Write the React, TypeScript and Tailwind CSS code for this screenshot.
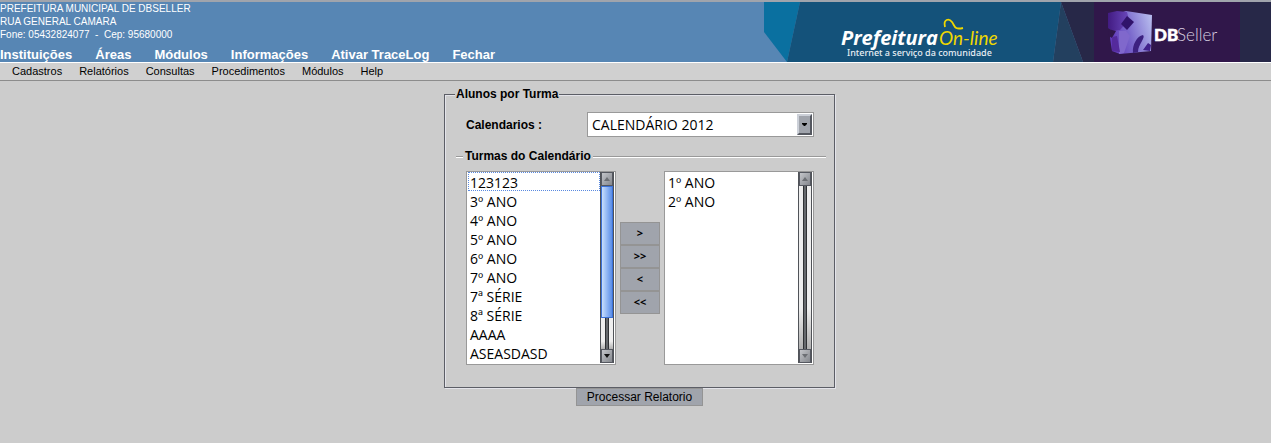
import { useState } from "react";

const areas = ["Instituições", "Áreas", "Módulos", "Informações", "Ativar TraceLog", "Fechar"];
const menus = ["Cadastros", "Relatórios", "Consultas", "Procedimentos", "Módulos", "Help"];
const turmas = ["123123", "3º ANO", "4º ANO", "5º ANO", "6º ANO", "7º ANO", "7ª SÉRIE", "8ª SÉRIE", "AAAA", "ASEASDASD"];

function Banner() {
  return (
    <svg width="507" height="60" viewBox="0 0 507 60" className="shrink-0" role="img" aria-label="Prefeitura On-line, DBSeller">
      <defs>
        <linearGradient id="cube" x1="0" y1="0.6" x2="1" y2="0.3">
          <stop offset="0" stopColor="#6038b8" />
          <stop offset="0.45" stopColor="#7a68cc" />
          <stop offset="1" stopColor="#b4b8ec" />
        </linearGradient>
        <linearGradient id="side" x1="0" y1="0" x2="1" y2="0">
          <stop offset="0" stopColor="#421b82" />
          <stop offset="1" stopColor="#6a48bc" />
        </linearGradient>
      </defs>
      <path d="M0 0H36L23 60L0 30Z" fill="#0a70a0" />
      <path d="M36 0H297L289 60H23Z" fill="#14527a" />
      <path d="M297 0L319 60H289Z" fill="#23405f" />
      <path d="M297 0H507V60H319Z" fill="#272848" />
      <path d="M330 0H476V60H330Z" fill="#30174a" />
      <text x="77" y="43" fontSize="20" fontWeight="700" fontStyle="italic" fill="#fff" fontFamily="'Open Sans',sans-serif">Prefeitura</text>
      <text x="175" y="43" fontSize="19" fontStyle="italic" fill="#f0d800" fontFamily="Lato,sans-serif">On-line</text>
      <text x="83" y="54" fontSize="9" fontWeight="500" fill="#e8eef4" fontFamily="'Noto Sans',sans-serif">Internet a serviço da comunidade</text>
      <path d="M181 25C179 17 185 16 188 20C191 24 190 28 199 26" fill="none" stroke="#f0d800" strokeWidth="1.8" />
      {/* cube: front face, darker left side, then the carved openings */}
      <path d="M347 14L362 9L388 13L387 49L356 52L348 49L346 36Z" fill="url(#cube)" />
      <path d="M344 11L353 9L363 10L365 18L356 28L348 29L344 26Z" fill="url(#side)" />
      <path d="M344 27L352 29L348 36L345 34Z" fill="#30174a" />
      <path d="M357 22L363 14L370 20L363 28Z" fill="#30136b" />
      <path d="M355 29L362 29L366 34L360 51L355 52Z" fill="#8068cc" />
      <path d="M348 35L353 34L356 50L348 49Z" fill="#542a9c" />
      <path d="M369 51C368 43 373 34 379 33C382 36 374 42 374 50Z" fill="#3c2180" />
      <path d="M379 48L384 41L387 43L386 49Z" fill="#40208a" />
      <text x="390" y="39" fontSize="17" fontWeight="900" fill="#fff" stroke="#fff" strokeWidth="0.5" fontFamily="Lato,sans-serif">DB</text>
      <text x="413" y="39" fontSize="17" fontWeight="300" fill="#d8d0e0" fontFamily="Lato,sans-serif">Seller</text>
    </svg>
  );
}

function ScrollBar({ thumb }: { thumb: boolean }) {
  const button = "flex h-3.5 w-full shrink-0 items-center justify-center border border-[#555860] bg-linear-to-br from-[#c4c6ca] to-[#85888e]";
  return (
    <div aria-hidden="true" className="flex w-3.5 shrink-0 flex-col border-x border-[#505358] bg-[#ededed]">
      <div className={button}>
        <svg width="6" height="4" viewBox="0 0 6 4"><path d="M3 0L6 4H0Z" fill="#6c6f74" /></svg>
      </div>
      {thumb && <div className="h-33 shrink-0 border border-[#3c72d8] bg-linear-to-r from-[#c8defc] to-[#5a8de8]" />}
      <div className="flex flex-1 justify-center bg-linear-to-b from-[#eeeeee] from-75% to-[#b0b0b0]">
        <div className="w-1 border-x border-[#2f3134] bg-[#65686c]" />
      </div>
      <div className={button}>
        <svg width="6" height="4" viewBox="0 0 6 4"><path d="M0 0H6L3 4Z" fill={thumb ? "#111" : "#6c6f74"} /></svg>
      </div>
    </div>
  );
}

function ListBox({ label, items, thumb, focused }: { label: string; items: string[]; thumb: boolean; focused: boolean }) {
  return (
    <div className="flex h-[194px] w-[150px] border border-[#999] bg-white px-px pb-px">
      <select
        multiple
        size={10}
        aria-label={label}
        className="min-w-0 flex-1 overflow-y-auto bg-white font-['Comic_Sans_MS','Open_Sans',sans-serif] text-[14px] text-black outline-none [scrollbar-width:none]"
      >
        {items.map((item, i) => (
          <option
            key={item}
            className={
              focused && i === 0
                ? "h-[19px] min-h-0 border border-dotted border-[#5a8ae0] px-px py-0 leading-[17px]"
                : "h-[19px] min-h-0 border border-transparent px-px py-0 leading-[17px]"
            }
          >
            {item}
          </option>
        ))}
      </select>
      <ScrollBar thumb={thumb} />
    </div>
  );
}

export default function App() {
  const [calendar, setCalendar] = useState("CALENDÁRIO 2012");
  return (
    <div className="min-h-screen bg-[#ccc] font-['Liberation_Sans',Arial,sans-serif] text-black">
      <header className="flex justify-between border-t-2 border-[#a0a4ac] bg-[#5786b4] text-white">
        <div className="flex flex-col justify-between">
          <address className="text-[10px] leading-[13px] not-italic">
            PREFEITURA MUNICIPAL DE DBSELLER<br />
            RUA GENERAL CAMARA<br />
            Fone: 05432824077 &nbsp;-&nbsp; Cep: 95680000
          </address>
          <nav aria-label="Principal" className="flex gap-[23px] text-[13px] leading-[15px] font-bold">
            {areas.map((a) => <a key={a} href="#">{a}</a>)}
          </nav>
        </div>
        <Banner />
      </header>
      <nav aria-label="Menu" className="flex h-[19px] gap-[17px] border-t border-b border-t-white border-b-[#8c8c8c] bg-[#d0d0d0] pl-3 text-[11px] leading-[17px]">
        {menus.map((m) => <a key={m} href="#">{m}</a>)}
      </nav>
      <main className="flex flex-col items-center pt-[5px] pl-2 text-[12px]">
        <form className="flex flex-col items-center" onSubmit={(e) => e.preventDefault()}>
          <fieldset className="w-[391px] border border-[#5c5e66] pr-2 pb-[22px] pl-[11px] shadow-[1px_1px_0_#e4e4ea,inset_1px_1px_0_#e4e4ea]">
            <legend className="-ml-px bg-[#ccc] px-px leading-4 font-bold">Alunos por Turma</legend>
            <div className="mt-2.5 flex items-center justify-between pr-3 pl-2.5">
              <label htmlFor="calendar" className="font-bold">Calendarios :</label>
              <div className="flex h-[25px] w-[227px] border border-[#999] bg-white p-px">
                <select
                  id="calendar"
                  value={calendar}
                  onChange={(e) => setCalendar(e.target.value)}
                  className="min-w-0 flex-1 appearance-none bg-white pl-[3px] font-['Comic_Sans_MS','Open_Sans',sans-serif] text-[14px] outline-none"
                >
                  <option>CALENDÁRIO 2012</option>
                </select>
                <span aria-hidden="true" className="flex w-[15px] items-center justify-center border-2 border-t-[#ccd0d8] border-r-[#555860] border-b-[#555860] border-l-[#ccd0d8] bg-[#a0a4ac]">
                  <svg width="5" height="3" viewBox="0 0 5 3"><path d="M0 0H5V1L3 3H2L0 1Z" /></svg>
                </span>
              </div>
            </div>
            <fieldset className="mt-[11px] border-t border-[#999] pr-3 pl-2.5 shadow-[inset_0_1px_0_#fff]">
              <legend className="-ml-[3px] bg-[#ccc] px-0.5 leading-4 font-bold">Turmas do Calendário</legend>
              <div className="mt-[7px] flex items-center justify-between">
                <ListBox label="Turmas do Calendário" items={turmas} thumb focused />
                <div className="flex w-10 flex-col">
                  {[">", ">>", "<", "<<"].map((s) => (
                    <button key={s} type="button" className="h-[23px] border border-[#949494] bg-[#a0a4ac] font-['Comic_Sans_MS','Open_Sans',sans-serif] text-[11px] font-bold">
                      {s}
                    </button>
                  ))}
                </div>
                <ListBox label="Turmas selecionadas" items={["1º ANO", "2º ANO"]} thumb={false} focused={false} />
              </div>
            </fieldset>
          </fieldset>
          <button type="submit" className="h-[18px] border border-[#949494] bg-[#a0a4ac] px-2.5 leading-4">Processar Relatorio</button>
        </form>
      </main>
    </div>
  );
}
